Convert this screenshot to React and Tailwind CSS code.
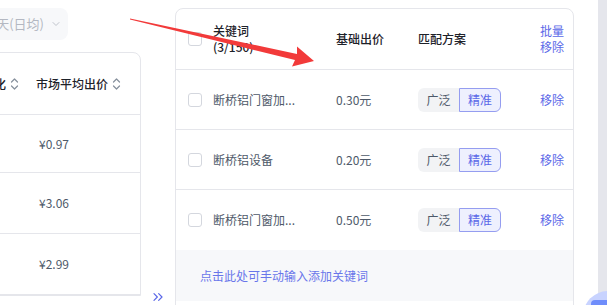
import { ChevronDown, ChevronsRight } from 'lucide-react'

const font = { fontFamily: '"Noto Sans CJK SC", "Noto Sans", sans-serif' }

const SortIcon = () => (
    <svg width="9" height="14" viewBox="0 0 9 14" fill="none" stroke="#86909c" strokeWidth="1.2" strokeLinecap="round" strokeLinejoin="round">
        <path d="M1.5 5 L4.5 2 L7.5 5" />
        <path d="M1.5 9 L4.5 12 L7.5 9" />
    </svg>
)

const Checkbox = () => (
    <span className="block w-[14px] h-[14px] rounded-[3px] border border-[#d4d7de] bg-white" />
)

const keywords = [
    { word: '断桥铝门窗加...', price: '0.30元' },
    { word: '断桥铝设备', price: '0.20元' },
    { word: '断桥铝门窗加...', price: '0.50元' },
]

const marketPrices = ['¥0.97', '¥3.06', '¥2.99']

const App = () => {
    return (
        <div className="relative w-[607px] h-[305px] overflow-hidden bg-white flex" style={font}>
            {/* left column, partly off screen */}
            <div className="-ml-[119px] w-[260px] shrink-0 pt-2 flex flex-col">
                <div className="w-[187px] h-8 shrink-0 rounded-lg bg-[#f7f8fa] flex items-center justify-end pr-[6px] gap-[6px] text-[13px] text-[#b4b8c2]">
                    <span>近7天(日均)</span>
                    <ChevronDown className="w-3 h-3 text-[#c0c4cc]" />
                </div>
                <div className="mt-3 border border-[#e5e6eb] rounded-tr-lg rounded-tl-lg">
                    <div className="h-[62px] flex items-center border-b border-[#e5e6eb] text-[12px] font-medium text-[#1d2129]">
                        <div className="w-[154px] flex items-center justify-end gap-1 pr-[17px]">
                            <span>出价优化</span>
                            <SortIcon />
                        </div>
                        <div className="flex items-center gap-1">
                            <span>市场平均出价</span>
                            <SortIcon />
                        </div>
                    </div>
                    {marketPrices.map((p, i) => (
                        <div
                            key={i}
                            className={`flex items-center border-b border-[#e5e6eb] text-[12px] text-[#4e5969] ${i === 0 ? 'h-[58px]' : 'h-[61px]'}`}
                        >
                            <div className="w-[154px]" />
                            <span className="pl-[3px]">{p}</span>
                        </div>
                    ))}
                </div>
            </div>

            {/* expand arrow */}
            <div className="w-[34px] shrink-0 flex flex-col justify-end items-center">
                <ChevronsRight className="w-4 h-4 text-[#5b68e8]" strokeWidth={1.8} />
            </div>

            {/* selected keywords */}
            <div className="mt-2 w-[399px] h-[330px] shrink-0 border border-[#e5e6eb] rounded-lg">
                <div className="h-[61px] flex items-center border-b border-[#e5e6eb] text-[12px] font-medium text-[#1d2129]">
                    <div className="w-[37px] pl-3 shrink-0"><Checkbox /></div>
                    <div className="w-[123px] shrink-0 leading-4">
                        <div>关键词</div>
                        <div>(3/150)</div>
                    </div>
                    <div className="w-[82px] shrink-0">基础出价</div>
                    <div className="w-[122px] shrink-0">匹配方案</div>
                    <div className="leading-4 font-normal text-[#5b68e8]">
                        <div>批量</div>
                        <div>移除</div>
                    </div>
                </div>
                {keywords.map((k, i) => (
                    <div
                        key={i}
                        className={`h-[60px] flex items-center text-[12px] text-[#4e5969] ${i < 2 ? 'border-b border-[#e5e6eb]' : ''}`}
                    >
                        <div className="w-[37px] pl-3 shrink-0"><Checkbox /></div>
                        <div className="w-[123px] shrink-0">{k.word}</div>
                        <div className="w-[82px] shrink-0">{k.price}</div>
                        <div className="w-[122px] shrink-0 flex">
                            <span className="w-[41px] h-[24px] flex items-center justify-center bg-[#f2f3f5] rounded-l-md">广泛</span>
                            <span className="w-[42px] h-[24px] flex items-center justify-center border border-[#959df0] bg-[#eef0fe] text-[#5b68e8] rounded-r-md">精准</span>
                        </div>
                        <div className="text-[#5b68e8]">移除</div>
                    </div>
                ))}
                <div className="h-[51px] bg-[#f7f8fa] flex items-center pl-6 text-[12px] text-[#6976ea]">
                    点击此处可手动输入添加关键词
                </div>
            </div>

            <div className="ml-auto w-[9px] h-full bg-[#e5e6ec]" />

            {/* floating helper button */}
            <div className="absolute left-[583px] top-[291px] w-[50px] h-[50px] rounded-full bg-[#c8d3ff]">
                <div className="absolute left-[8px] top-[9px] w-[22px] h-[12px] rounded-sm bg-[#6f8dfb]" />
            </div>

            {/* red annotation arrow */}
            <svg className="absolute left-0 top-0 pointer-events-none" width="607" height="305" viewBox="0 0 607 305">
                <polygon
                    points="130,18.4 297,54 297,46.5 314,61 292,66.5 295,60 130,19.6"
                    fill="#f23a3a"
                />
            </svg>
        </div>
    )
}

export default App
